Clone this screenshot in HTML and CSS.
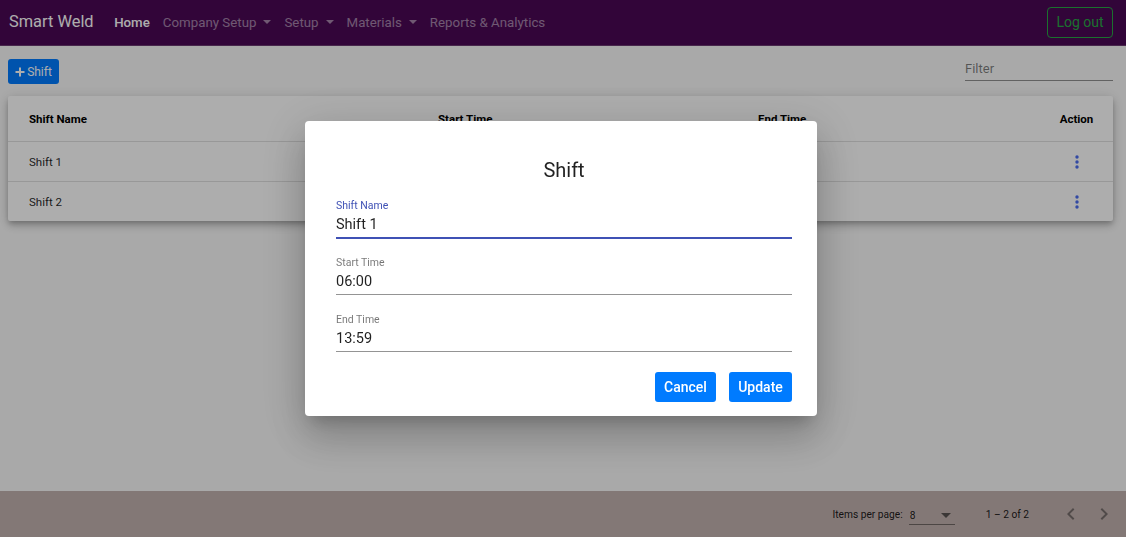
FILE: index.html
```html
<!DOCTYPE html>
<html lang="en">
<head>
<meta charset="utf-8">
<title>Smart Weld - Shift</title>
<link rel="stylesheet" href="styles.css">
</head>
<body>
<div class="app">
  <header class="navbar">
    <a class="brand">Smart Weld</a>
    <nav class="nav">
      <a class="nav-link active">Home</a>
      <a class="nav-link dropdown">Company Setup</a>
      <a class="nav-link dropdown">Setup</a>
      <a class="nav-link dropdown">Materials</a>
      <a class="nav-link">Reports &amp; Analytics</a>
    </nav>
    <button class="btn-logout">Log out</button>
  </header>

  <main class="content">
    <div class="toolbar">
      <button class="btn-add">
        <svg class="plus" viewBox="0 0 10 10" width="10" height="10"><path d="M4 0.5h2v3.5h3.5v2H6v3.5H4V6H0.5V4H4z" fill="currentColor"/></svg>
        Shift
      </button>
      <div class="filter">
        <input class="filter-input" type="text" placeholder="Filter">
      </div>
    </div>

    <div class="card">
      <div class="row header">
        <div class="cell">Shift Name</div>
        <div class="cell">Start Time</div>
        <div class="cell">End Time</div>
        <div class="cell action">Action</div>
      </div>
      <div class="row">
        <div class="cell">Shift 1</div>
        <div class="cell">06:00</div>
        <div class="cell">13:59</div>
        <div class="cell action"><svg class="kebab" viewBox="0 0 4 14" width="4" height="14"><circle cx="2" cy="2" r="1.7"/><circle cx="2" cy="7" r="1.7"/><circle cx="2" cy="12" r="1.7"/></svg></div>
      </div>
      <div class="row last">
        <div class="cell">Shift 2</div>
        <div class="cell">14:00</div>
        <div class="cell">21:59</div>
        <div class="cell action"><svg class="kebab" viewBox="0 0 4 14" width="4" height="14"><circle cx="2" cy="2" r="1.7"/><circle cx="2" cy="7" r="1.7"/><circle cx="2" cy="12" r="1.7"/></svg></div>
      </div>
    </div>
  </main>

  <footer class="paginator">
    <span class="pg-label">Items per page:</span>
    <div class="pg-select">
      <span>8</span>
      <span class="pg-arrow"></span>
    </div>
    <span class="pg-range">1 – 2 of 2</span>
    <div class="pg-nav">
      <svg viewBox="0 0 24 24" width="24" height="24"><path d="M15.4 7.4L14 6l-6 6 6 6 1.4-1.4L10.8 12z"/></svg>
      <svg viewBox="0 0 24 24" width="24" height="24"><path d="M10 6L8.6 7.4 13.2 12l-4.6 4.6L10 18l6-6z"/></svg>
    </div>
  </footer>
</div>

<div class="backdrop">
  <div class="dialog">
    <h2 class="dialog-title">Shift</h2>
    <div class="field focused">
      <label class="field-label">Shift Name</label>
      <div class="field-value">Shift 1</div>
    </div>
    <div class="field">
      <label class="field-label">Start Time</label>
      <div class="field-value">06:00</div>
    </div>
    <div class="field">
      <label class="field-label">End Time</label>
      <div class="field-value">13:59</div>
    </div>
    <div class="actions">
      <button class="btn-primary btn-cancel">Cancel</button>
      <button class="btn-primary btn-update">Update</button>
    </div>
  </div>
</div>
</body>
</html>
```

FILE: styles.css
```css
* { box-sizing: border-box; }

html, body {
  margin: 0;
  height: 100%;
}

body {
  font-family: Roboto, "Liberation Sans", Arial, sans-serif;
  background: #fafafa;
  color: rgba(0,0,0,.87);
  overflow: hidden;
}

.app {
  display: flex;
  flex-direction: column;
  height: 100vh;
}

/* Navbar */
.navbar {
  height: 46px;
  flex: none;
  display: flex;
  align-items: center;
  background: #4b0855;
  border-bottom: 1px solid #6a3a70;
  padding: 0 13px 0 9px;
}

.brand {
  font-size: 16.4px;
  color: #ffffff;
  margin-right: 14px;
  line-height: 1;
}

.nav {
  display: flex;
  align-items: center;
  flex: 1;
}

.nav-link {
  font-size: 13.3px;
  padding: 0 6.5px;
  color: rgba(255,255,255,.5);
  line-height: 1;
  white-space: nowrap;
}

.nav-link.active {
  color: #fff;
  font-weight: 500;
}

.nav-link.dropdown::after {
  content: "";
  display: inline-block;
  margin-left: 7px;
  vertical-align: 3px;
  border-top: 4px solid;
  border-left: 4px solid transparent;
  border-right: 4px solid transparent;
}

.btn-logout {
  font-family: inherit;
  font-size: 14px;
  color: #28a745;
  background: transparent;
  border: 1px solid #28a745;
  border-radius: 4px;
  height: 31px;
  width: 66px;
  padding: 0;
  margin-top: -1px;
}

/* Content */
.content {
  flex: 1;
  padding: 13px 13px 0 8px;
}

.toolbar {
  display: flex;
  justify-content: space-between;
  align-items: flex-start;
  margin-bottom: 12px;
}

.btn-add {
  font-family: inherit;
  font-size: 12px;
  height: 25px;
  width: 51px;
  padding: 0;
  display: flex;
  align-items: center;
  justify-content: center;
  gap: 2px;
  background: #007bff;
  color: #fff;
  border: none;
  border-radius: 3px;
}

.plus { display: block; }

.filter {
  width: 148px;
  margin-top: -1px;
}

.filter-input {
  width: 100%;
  font-family: inherit;
  font-size: 13px;
  height: 20px;
  padding: 0 0 3px 0;
  border: none;
  border-bottom: 1px solid rgba(0,0,0,.42);
  background: transparent;
  outline: none;
}

.filter-input::placeholder { color: rgba(0,0,0,.5); }

.card {
  background: #fff;
  box-shadow: 0 3px 5px -1px rgba(0,0,0,.2), 0 5px 8px 0 rgba(0,0,0,.14), 0 1px 14px 0 rgba(0,0,0,.12);
  border-radius: 2px;
}

.row {
  display: grid;
  grid-template-columns: 409px 320px 1fr 80px;
  align-items: center;
  height: 40px;
  padding: 0 0 0 21px;
  border-bottom: 1px solid rgba(0,0,0,.12);
  font-size: 11.5px;
}

.row.header {
  height: 46px;
  font-weight: bold;
  color: #000;
}

.row.last { border-bottom: none; height: 39px; }

.cell.action {
  text-align: center;
  padding-left: 6px;
  display: flex;
  justify-content: center;
}

.kebab { fill: #4a6cf0; display: block; margin-left: 2px; }
.row.header .cell.action { display: block; padding-left: 7px; }

/* Paginator */
.paginator {
  height: 46px;
  flex: none;
  background: #c1b2af;
  display: flex;
  align-items: center;
  justify-content: flex-end;
  padding-right: 10px;
  font-size: 10.2px;
  color: rgba(0,0,0,.87);
}

.pg-label { margin-right: 6px; }

.pg-select {
  width: 46px;
  height: 18px;
  display: flex;
  align-items: center;
  justify-content: space-between;
  border-bottom: 1px solid rgba(0,0,0,.42);
  padding: 0 4px 0 1px;
  margin-top: 7px;
  margin-bottom: -1px;
  position: relative;
  top: -2px;
}

.pg-arrow {
  width: 0;
  height: 0;
  border-left: 5px solid transparent;
  border-right: 5px solid transparent;
  border-top: 5px solid rgba(0,0,0,.54);
}

.pg-range { margin-left: 31px; margin-right: 30px; }

.pg-nav {
  display: flex;
  gap: 9px;
}

.pg-nav svg { fill: rgba(0,0,0,.38); display: block; }

/* Dialog */
.backdrop {
  position: fixed;
  inset: 0;
  background: rgba(0,0,0,.32);
  display: flex;
  align-items: center;
  justify-content: center;
}

.dialog {
  width: 512px;
  height: 295px;
  margin-left: -4px;
  background: #fff;
  border-radius: 4px;
  padding: 33px 25px 15px 31px;
  box-shadow: 0 11px 15px -7px rgba(0,0,0,.2), 0 24px 38px 3px rgba(0,0,0,.14), 0 9px 46px 8px rgba(0,0,0,.12);
}

.dialog-title {
  margin: 0 0 13px;
  font-size: 20px;
  font-weight: 400;
  line-height: 32px;
  text-align: center;
  color: rgba(0,0,0,.87);
}

.field {
  border-bottom: 1px solid rgba(0,0,0,.42);
  padding-bottom: 2px;
  margin-bottom: 18px;
}

.field.focused {
  border-bottom-color: #3f51b5;
  box-shadow: 0 1px 0 #3f51b5;
}

.field-label {
  display: block;
  font-size: 10.5px;
  line-height: 14px;
  color: rgba(0,0,0,.54);
}

.field.focused .field-label { color: #3f51b5; }

.field-value {
  margin-top: 2px;
  font-size: 14.5px;
  line-height: 20px;
  color: rgba(0,0,0,.87);
}

.actions {
  display: flex;
  justify-content: flex-end;
  gap: 13px;
  margin-top: 20px;
}

.btn-primary {
  font-family: inherit;
  font-size: 14px;
  font-weight: 500;
  height: 30px;
  padding: 0;
  color: #fff;
  background: #007bff;
  border: none;
  border-radius: 3px;
}

.btn-cancel { width: 61px; }
.btn-update { width: 63px; }
```
